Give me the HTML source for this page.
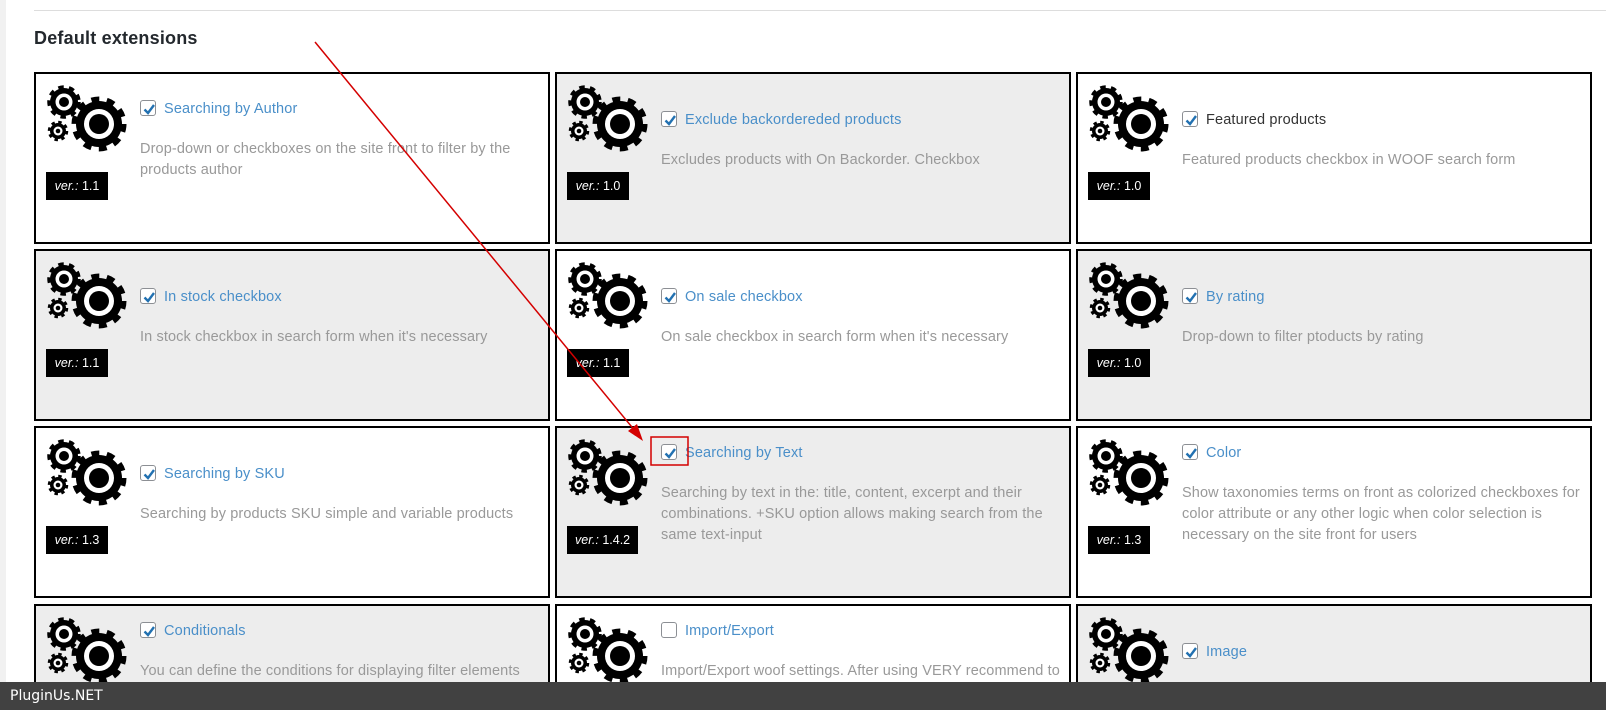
<!DOCTYPE html>
<html style="height:710px;overflow:hidden"><head><meta charset="utf-8"><style>
*{margin:0;padding:0;box-sizing:border-box}
body{width:1606px;height:710px;overflow:hidden;background:#fff;font-family:"Liberation Sans",sans-serif;position:relative}
.strip{position:absolute;left:0;top:0;width:6px;height:710px;background:#f1f1f1}
.hr{position:absolute;left:34px;top:10px;right:0;height:1px;background:#ddd}
h2{position:absolute;left:34px;top:28px;font-size:18px;font-weight:bold;color:#23282d;letter-spacing:0.2px}
.card{position:absolute;width:516px;height:172px;border:2px solid #000;background:#fff;overflow:hidden}
.card.g{background:#ededed}
.card.last{height:106px;border-bottom:none}
.gear{position:absolute;left:0;top:0}
.ver{position:absolute;left:10px;top:98px;height:28px;min-width:62px;padding:0 8px;background:#000;color:#fff;font-size:12.5px;line-height:28px;text-align:center}
.ver i{font-style:italic}
.txt{position:absolute;left:104px;right:8px}
.t{height:21px;line-height:21px;font-size:14.5px;color:#4a8fc9;white-space:nowrap;letter-spacing:0.15px}
.t.dark{color:#333}
.cb{display:inline-block;width:16px;height:16px;border:1px solid #8c8f94;border-radius:3px;background:#fff;vertical-align:-3px;margin-right:8px;position:relative}
.cb svg{position:absolute;left:1px;top:1px}
.d{margin-top:19px;font-size:14.5px;line-height:21px;color:#999;letter-spacing:0.12px}
.bar{position:absolute;left:0;top:682px;width:1606px;height:28px;background:#414141;color:#fff;font-size:14px;line-height:28px;padding-left:10px;font-family:"DejaVu Sans",sans-serif}
</style></head><body>
<div class="strip"></div>
<div class="hr"></div>
<h2>Default extensions</h2>

<svg width="0" height="0" style="position:absolute">
<defs>
<g id="gear">
 <circle cx="63" cy="50" r="23" fill="#000"/>
 <circle cx="63" cy="50" r="25" fill="none" stroke="#000" stroke-width="5" stroke-dasharray="8 7.7"/>
 <circle cx="63" cy="50" r="15" fill="#fff"/>
 <circle cx="63" cy="50" r="10" fill="#000"/>
 <circle cx="28" cy="28" r="14" fill="#000"/>
 <circle cx="28" cy="28" r="15" fill="none" stroke="#000" stroke-width="3.5" stroke-dasharray="5.5 5.3"/>
 <circle cx="28" cy="28" r="8.5" fill="#fff"/>
 <circle cx="28" cy="28" r="5" fill="#000"/>
 <circle cx="22" cy="57" r="8" fill="#000"/>
 <circle cx="22" cy="57" r="9" fill="none" stroke="#000" stroke-width="2.5" stroke-dasharray="3.5 3.56"/>
 <circle cx="22" cy="57" r="4.5" fill="#fff"/>
 <circle cx="22" cy="57" r="2.3" fill="#000"/>
</g>
<g id="chk"><path d="M2.5 7.5 L6 11 L12 3" fill="none" stroke="#2271b1" stroke-width="2.4"/></g>
</defs></svg>

<!-- Row 1 -->
<div class="card" style="left:34px;top:72px">
 <svg class="gear" width="100" height="90" viewBox="0 0 100 90"><use href="#gear"/></svg>
 <div class="ver"><i>ver.:</i> 1.1</div>
 <div class="txt" style="top:25px"><div class="t"><span class="cb"><svg width="14" height="14"><use href="#chk"/></svg></span>Searching by Author</div><div class="d">Drop-down or checkboxes on the site front to filter by the products author</div></div>
</div>
<div class="card g" style="left:555px;top:72px">
 <svg class="gear" width="100" height="90" viewBox="0 0 100 90"><use href="#gear"/></svg>
 <div class="ver"><i>ver.:</i> 1.0</div>
 <div class="txt" style="top:36px"><div class="t"><span class="cb"><svg width="14" height="14"><use href="#chk"/></svg></span>Exclude backordereded products</div><div class="d">Excludes products with On Backorder. Checkbox</div></div>
</div>
<div class="card" style="left:1076px;top:72px">
 <svg class="gear" width="100" height="90" viewBox="0 0 100 90"><use href="#gear"/></svg>
 <div class="ver"><i>ver.:</i> 1.0</div>
 <div class="txt" style="top:36px"><div class="t dark"><span class="cb"><svg width="14" height="14"><use href="#chk"/></svg></span>Featured products</div><div class="d">Featured products checkbox in WOOF search form</div></div>
</div>

<!-- Row 2 -->
<div class="card g" style="left:34px;top:249px">
 <svg class="gear" width="100" height="90" viewBox="0 0 100 90"><use href="#gear"/></svg>
 <div class="ver"><i>ver.:</i> 1.1</div>
 <div class="txt" style="top:36px"><div class="t"><span class="cb"><svg width="14" height="14"><use href="#chk"/></svg></span>In stock checkbox</div><div class="d">In stock checkbox in search form when it's necessary</div></div>
</div>
<div class="card" style="left:555px;top:249px">
 <svg class="gear" width="100" height="90" viewBox="0 0 100 90"><use href="#gear"/></svg>
 <div class="ver"><i>ver.:</i> 1.1</div>
 <div class="txt" style="top:36px"><div class="t"><span class="cb"><svg width="14" height="14"><use href="#chk"/></svg></span>On sale checkbox</div><div class="d">On sale checkbox in search form when it's necessary</div></div>
</div>
<div class="card g" style="left:1076px;top:249px">
 <svg class="gear" width="100" height="90" viewBox="0 0 100 90"><use href="#gear"/></svg>
 <div class="ver"><i>ver.:</i> 1.0</div>
 <div class="txt" style="top:36px"><div class="t"><span class="cb"><svg width="14" height="14"><use href="#chk"/></svg></span>By rating</div><div class="d">Drop-down to filter ptoducts by rating</div></div>
</div>

<!-- Row 3 -->
<div class="card" style="left:34px;top:426px">
 <svg class="gear" width="100" height="90" viewBox="0 0 100 90"><use href="#gear"/></svg>
 <div class="ver"><i>ver.:</i> 1.3</div>
 <div class="txt" style="top:36px"><div class="t"><span class="cb"><svg width="14" height="14"><use href="#chk"/></svg></span>Searching by SKU</div><div class="d">Searching by products SKU simple and variable products</div></div>
</div>
<div class="card g" style="left:555px;top:426px">
 <svg class="gear" width="100" height="90" viewBox="0 0 100 90"><use href="#gear"/></svg>
 <div class="ver"><i>ver.:</i> 1.4.2</div>
 <div class="txt" style="top:15px"><div class="t"><span class="cb"><svg width="14" height="14"><use href="#chk"/></svg></span>Searching by Text</div><div class="d">Searching by text in the: title, content, excerpt and their combinations. +SKU option allows making search from the same text-input</div></div>
</div>
<div class="card" style="left:1076px;top:426px">
 <svg class="gear" width="100" height="90" viewBox="0 0 100 90"><use href="#gear"/></svg>
 <div class="ver"><i>ver.:</i> 1.3</div>
 <div class="txt" style="top:15px"><div class="t"><span class="cb"><svg width="14" height="14"><use href="#chk"/></svg></span>Color</div><div class="d">Show taxonomies terms on front as colorized checkboxes for color attribute or any other logic when color selection is necessary on the site front for users</div></div>
</div>

<!-- Row 4 -->
<div class="card g last" style="left:34px;top:604px">
 <svg class="gear" width="100" height="90" viewBox="0 0 100 90"><use href="#gear"/></svg>
 <div class="txt" style="top:15px"><div class="t"><span class="cb"><svg width="14" height="14"><use href="#chk"/></svg></span>Conditionals</div><div class="d">You can define the conditions for displaying filter elements</div></div>
</div>
<div class="card last" style="left:555px;top:604px">
 <svg class="gear" width="100" height="90" viewBox="0 0 100 90"><use href="#gear"/></svg>
 <div class="txt" style="top:15px"><div class="t"><span class="cb"></span>Import/Export</div><div class="d" style="white-space:nowrap">Import/Export woof settings. After using VERY recommend to</div></div>
</div>
<div class="card g last" style="left:1076px;top:604px">
 <svg class="gear" width="100" height="90" viewBox="0 0 100 90"><use href="#gear"/></svg>
 <div class="txt" style="top:36px"><div class="t"><span class="cb"><svg width="14" height="14"><use href="#chk"/></svg></span>Image</div></div>
</div>

<!-- annotation -->
<svg style="position:absolute;left:0;top:0" width="1606" height="710">
 <line x1="315" y1="42" x2="636" y2="432" stroke="#d40000" stroke-width="1.5"/>
 <path d="M643 441 L628 431 L637 424 Z" fill="#d40000"/>
 <rect x="651" y="437" width="37" height="28" fill="none" stroke="#d40000" stroke-width="1.5"/>
</svg>

<div class="bar">PluginUs.NET</div>
</body></html>
